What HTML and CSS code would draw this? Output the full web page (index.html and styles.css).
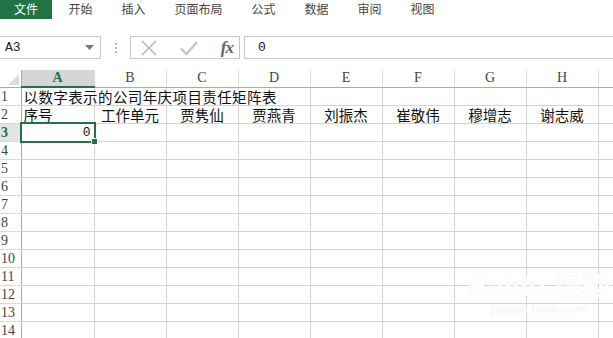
FILE: index.html
```html
<!DOCTYPE html>
<html lang="zh-CN">
<head>
  <meta charset="UTF-8" />
  <title>工作簿</title>
  <link rel="stylesheet" href="styles.css">
</head>
<body>
  <div class="tabs">
    <div class="tab file">文件</div>
    <div class="tab first">开始</div>
    <div class="tab">插入</div>
    <div class="tab">页面布局</div>
    <div class="tab">公式</div>
    <div class="tab">数据</div>
    <div class="tab">审阅</div>
    <div class="tab">视图</div>
  </div>

  <div class="formula-bar">
    <div class="name-box">
      <span>A3</span>
      <svg width="9" height="5" viewBox="0 0 9 5"><path d="M0 0h9L4.5 5z" fill="#777"/></svg>
    </div>
    <div class="dots">
      <i></i><i></i><i></i>
    </div>
    <div class="fx-box">
      <svg width="18" height="18" viewBox="0 0 18 18"><path d="M2 2L16 16M16 2L2 16" stroke="#b8b8b8" stroke-width="1.6"/></svg>
      <svg width="20" height="18" viewBox="0 0 20 18"><path d="M2 9.5L7.5 15L18 3" stroke="#c4c4c4" stroke-width="2.4" fill="none"/></svg>
      <span class="fx">fx</span>
    </div>
    <div class="formula-input">0</div>
  </div>

  <table class="sheet">
    <colgroup>
      <col class="c-head">
      <col class="c-a">
      <col class="c-std"><col class="c-std"><col class="c-std">
      <col class="c-std"><col class="c-std"><col class="c-std"><col class="c-std">
      <col class="c-rest">
    </colgroup>
    <thead>
      <tr>
        <th class="corner"><span class="tri"></span></th>
        <th class="active-col">A</th>
        <th>B</th><th>C</th><th>D</th><th>E</th><th>F</th><th>G</th><th>H</th><th></th>
      </tr>
    </thead>
    <tbody>
      <tr>
        <th>1</th>
        <td class="overflow">以数字表示的公司年庆项目责任矩阵表</td>
        <td></td><td></td><td></td><td></td><td></td><td></td><td></td><td></td>
      </tr>
      <tr>
        <th>2</th>
        <td>序号</td>
        <td class="mid">工作单元</td>
        <td class="mid">贾隽仙</td>
        <td class="mid">贾燕青</td>
        <td class="mid">刘振杰</td>
        <td class="mid">崔敬伟</td>
        <td class="mid">穆增志</td>
        <td class="mid">谢志威</td>
        <td></td>
      </tr>
      <tr>
        <th class="active-row">3</th>
        <td class="num selected">0<span class="sel-frame"></span></td>
        <td></td><td></td><td></td><td></td><td></td><td></td><td></td><td></td>
      </tr>
      <tr><th>4</th><td></td><td></td><td></td><td></td><td></td><td></td><td></td><td></td><td></td></tr>
      <tr><th>5</th><td></td><td></td><td></td><td></td><td></td><td></td><td></td><td></td><td></td></tr>
      <tr><th>6</th><td></td><td></td><td></td><td></td><td></td><td></td><td></td><td></td><td></td></tr>
      <tr><th>7</th><td></td><td></td><td></td><td></td><td></td><td></td><td></td><td></td><td></td></tr>
      <tr><th>8</th><td></td><td></td><td></td><td></td><td></td><td></td><td></td><td></td><td></td></tr>
      <tr><th>9</th><td></td><td></td><td></td><td></td><td></td><td></td><td></td><td></td><td></td></tr>
      <tr><th>10</th><td></td><td></td><td></td><td></td><td></td><td></td><td></td><td></td><td></td></tr>
      <tr><th>11</th><td></td><td></td><td></td><td></td><td></td><td></td><td></td><td></td><td></td></tr>
      <tr><th>12</th><td></td><td></td><td></td><td></td><td></td><td></td><td></td><td></td><td></td></tr>
      <tr><th>13</th><td></td><td></td><td></td><td></td><td></td><td></td><td></td><td></td><td></td></tr>
      <tr><th>14</th><td></td><td></td><td></td><td></td><td></td><td></td><td></td><td></td><td></td></tr>
    </tbody>
  </table>

  <div class="watermark">
    <div class="wm-logo">Bai<span>du</span> 经验</div>
    <div class="wm-url">jingyan.baidu.com</div>
  </div>
</body>
</html>
```

FILE: styles.css
```css
body {
  margin: 0;
  background: #fff;
  font-family: "Noto Sans CJK SC", sans-serif;
  color: #222;
  width: 613px;
  height: 338px;
  overflow: hidden;
  position: relative;
}

/* ribbon tabs */
.tabs {
  display: flex;
  height: 19px;
  align-items: stretch;
}

.tab {
  font-size: 12px;
  line-height: 18px;
  color: #444;
  padding: 0 14.5px;
}

.tab.file {
  width: 52px;
  padding: 0;
  text-align: center;
  background: #217346;
  color: #fff;
}

.tab.first {
  margin-left: 2px;
}

/* formula bar */
.formula-bar {
  display: flex;
  align-items: center;
  margin-top: 17px;
  height: 23px;
}

.name-box {
  box-sizing: border-box;
  width: 101px;
  height: 23px;
  border: 1px solid #c6c6c6;
  border-left: none;
  display: flex;
  align-items: center;
  justify-content: space-between;
  padding: 0 6px 0 5px;
  font-family: "Liberation Mono", monospace;
  font-size: 13px;
  color: #222;
}

.dots {
  width: 29px;
  display: flex;
  flex-direction: column;
  align-items: center;
  gap: 2px;
}

.dots i {
  width: 2px;
  height: 2px;
  background: #b4b4b4;
}

.fx-box {
  box-sizing: border-box;
  width: 110px;
  height: 23px;
  border: 1px solid #c6c6c6;
  display: flex;
  align-items: center;
  justify-content: space-between;
  padding: 0 6px 0 9px;
}

.fx {
  font-family: "Liberation Serif", serif;
  font-style: italic;
  font-weight: bold;
  font-size: 17px;
  color: #666;
  letter-spacing: -1px;
}

.formula-input {
  box-sizing: border-box;
  flex: 1;
  height: 23px;
  margin-left: 4px;
  border: 1px solid #c6c6c6;
  border-right: none;
  padding-left: 13px;
  font-family: "Liberation Mono", monospace;
  font-size: 13px;
  line-height: 21px;
}

/* sheet */
.sheet {
  margin-top: 11px;
  border-collapse: collapse;
  table-layout: fixed;
  width: 630px;
}

.c-head { width: 21px; }
.c-a { width: 73px; }
.c-std { width: 72px; }
.c-rest { width: 32px; }

.sheet th,
.sheet td {
  padding: 0;
  height: 17px;
  border: 1px solid #d4d4d4;
  white-space: nowrap;
}

.sheet thead th {
  height: 16px;
  border-top: none;
  border-bottom: 1px solid #ababab;
  border-left-color: #dadada;
  border-right-color: #dadada;
  font-family: "Liberation Serif", serif;
  font-weight: normal;
  font-size: 14px;
  color: #444;
  line-height: 16px;
}

.sheet thead th.corner {
  position: relative;
  border-left: none;
  border-right: 1px solid #ababab;
}

.tri {
  position: absolute;
  right: 2px;
  bottom: 2px;
  width: 0;
  height: 0;
  border-left: 11px solid transparent;
  border-bottom: 11px solid #dcdcdc;
}

.sheet thead th.active-col {
  background: #d6d6d6;
  border-bottom: 2px solid #217346;
  color: #217346;
  font-weight: bold;
}

.sheet tbody th {
  border-left: none;
  border-right: 1px solid #ababab;
  border-bottom-color: #dadada;
  font-family: "Liberation Serif", serif;
  font-weight: normal;
  font-size: 14px;
  color: #444;
  text-align: left;
  padding-left: 1px;
  line-height: 17px;
}

.sheet tbody th.active-row {
  color: #217346;
  font-weight: bold;
  background: #e4e4e4;
}

.sheet td {
  font-size: 14.5px;
  line-height: 17px;
  color: #111;
  padding-left: 2px;
}

.sheet td.overflow {
  overflow: visible;
  position: relative;
  z-index: 1;
  letter-spacing: 0.4px;
}

.sheet td.mid {
  text-align: center;
  padding-left: 0;
}

.sheet td.num {
  text-align: right;
  padding-right: 3px;
  font-family: "Liberation Mono", monospace;
  font-size: 13px;
}

.sheet td.selected {
  position: relative;
}

.sel-frame {
  position: absolute;
  left: -2px;
  top: -2px;
  right: -2px;
  bottom: -2px;
  border: 2px solid #217346;
}

.sel-frame::after {
  content: "";
  position: absolute;
  right: -4px;
  bottom: -4px;
  width: 5px;
  height: 5px;
  background: #217346;
  border: 1px solid #fff;
}

/* faint watermark */
.watermark {
  position: absolute;
  left: 468px;
  top: 272px;
  text-align: center;
  color: #fefefe;
  text-shadow: 0 0 1px #e6e6e6;
}

.wm-logo {
  font-family: "Liberation Sans", sans-serif;
  font-size: 28px;
  font-weight: bold;
  line-height: 30px;
}

.wm-url {
  font-family: "Liberation Sans", sans-serif;
  font-size: 12px;
}
```
